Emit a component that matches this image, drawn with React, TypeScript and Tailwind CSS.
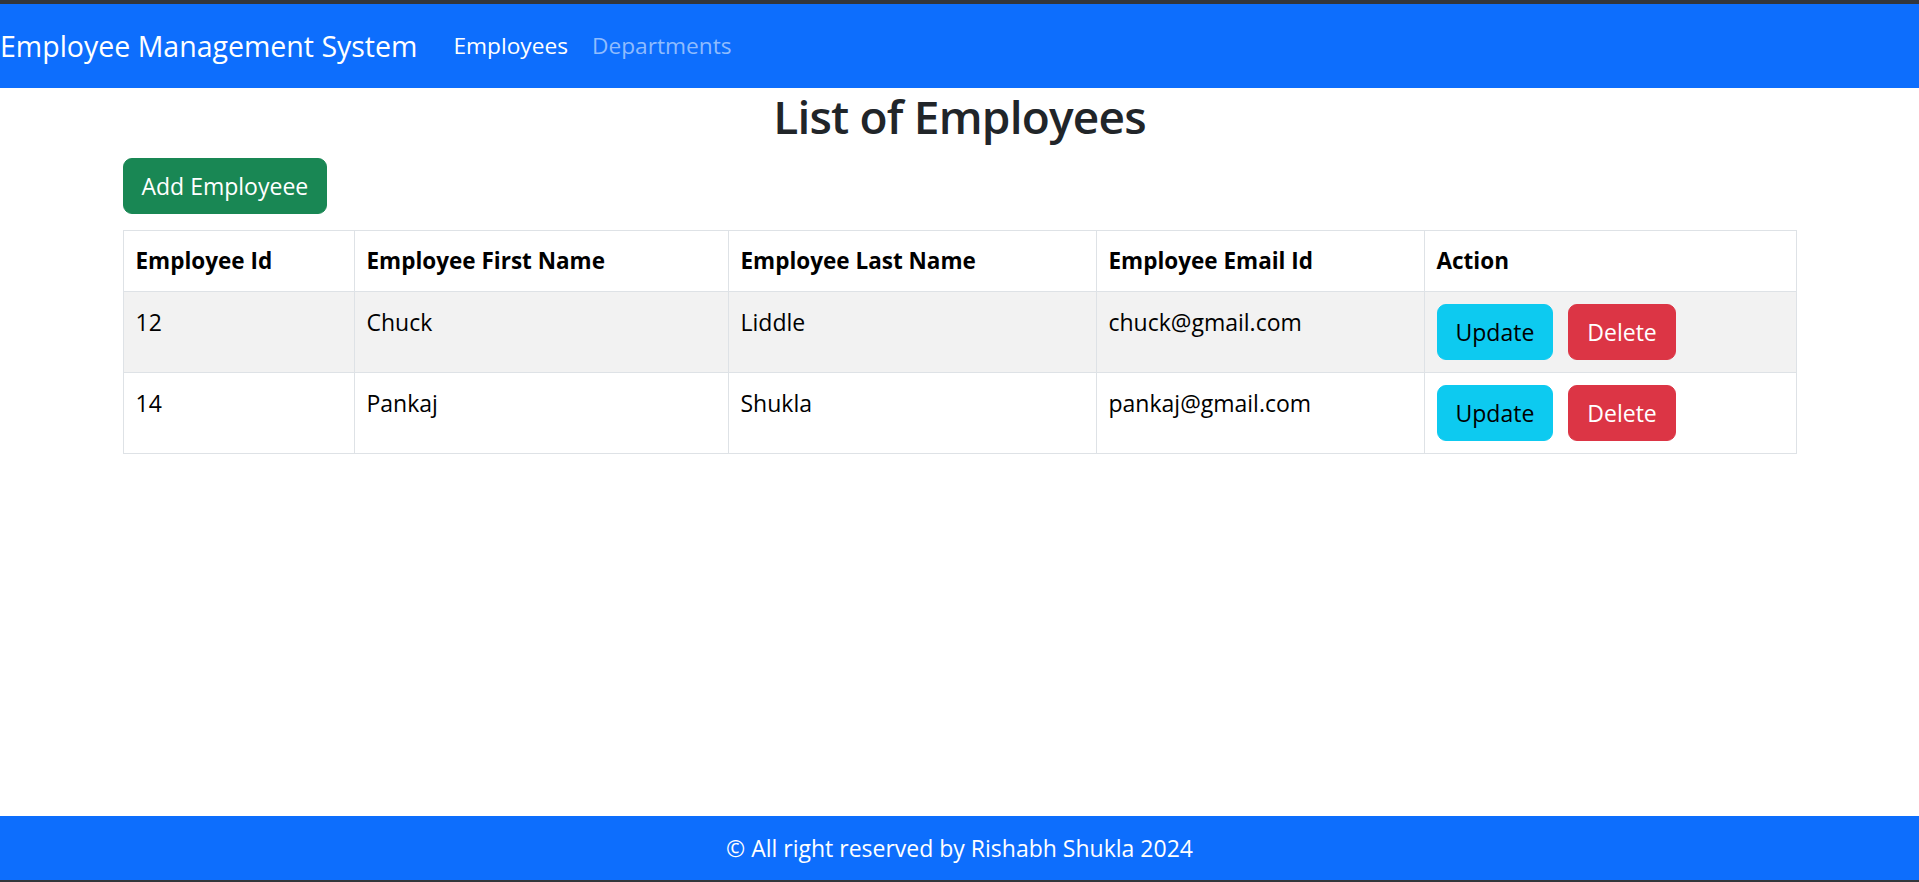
import React from "react";

type Employee = {
  id: number;
  firstName: string;
  lastName: string;
  email: string;
};

const employees: Employee[] = [
  { id: 12, firstName: "Chuck", lastName: "Liddle", email: "chuck@gmail.com" },
  { id: 14, firstName: "Pankaj", lastName: "Shukla", email: "pankaj@gmail.com" },
];

const Header = () => {
  return (
    <header className="h-[84px] bg-[#0d6efd] flex items-center">
      <span className="text-[28.5px] leading-[45px] text-white mr-[24px]">
        Employee Management System
      </span>
      <nav className="flex">
        <a className="px-[12px] text-[22.7px] leading-[36px] text-white">Employees</a>
        <a className="px-[12px] text-[22.7px] leading-[36px] text-[#8fbcfe]">Departments</a>
      </nav>
    </header>
  );
};

const Footer = () => {
  return (
    <footer className="h-[64px] bg-[#0d6efd] flex items-center justify-center">
      <span className="text-[23px] leading-[36px] text-white">
        © All right reserved by Rishabh Shukla 2024
      </span>
    </footer>
  );
};

const cell = "px-[12px] py-[12px] border border-[#dee2e6] align-top text-left";

export default function App() {
  return (
    <div className="h-[882px] flex flex-col bg-white font-['Open_Sans',sans-serif]">
      <div className="h-[4px] bg-[#33363b]" />
      <Header />

      <main className="flex-1">
        <div className="w-[1710px] mx-auto px-[18px]">
          <h2 className="text-[46px] leading-[57.6px] font-semibold tracking-[-0.8px] text-center text-[#212529] mb-[12px]">
            List of Employees
          </h2>

          <button className="bg-[#198754] border border-[#198754] text-white text-[23px] leading-[36px] py-[9px] px-[18px] rounded-[9px]">
            Add Employeee
          </button>

          <table className="w-full mt-[16px] border-collapse border border-[#dee2e6] text-[23px] leading-[36px] text-black">
            <thead>
              <tr className="text-[22.5px]">
                <th className={`${cell} w-[231px] font-bold`}>Employee Id</th>
                <th className={`${cell} w-[374px] font-bold`}>Employee First Name</th>
                <th className={`${cell} w-[368px] font-bold`}>Employee Last Name</th>
                <th className={`${cell} w-[328px] font-bold`}>Employee Email Id</th>
                <th className={`${cell} font-bold`}>Action</th>
              </tr>
            </thead>
            <tbody>
              {employees.map((emp, i) => (
                <tr key={emp.id} className={i % 2 === 0 ? "bg-[#f2f2f2]" : "bg-white"}>
                  <td className={cell}>{emp.id}</td>
                  <td className={cell}>{emp.firstName}</td>
                  <td className={cell}>{emp.lastName}</td>
                  <td className={cell}>{emp.email}</td>
                  <td className={cell}>
                    <button className="bg-[#0dcaf0] border border-[#0dcaf0] text-black py-[9px] px-[18px] rounded-[9px]">
                      Update
                    </button>
                    <button className="ml-[15px] bg-[#dc3545] border border-[#dc3545] text-white py-[9px] px-[18px] rounded-[9px]">
                      Delete
                    </button>
                  </td>
                </tr>
              ))}
            </tbody>
          </table>
        </div>
      </main>

      <Footer />
      <div className="h-[2px] bg-[#33363b]" />
    </div>
  );
}
